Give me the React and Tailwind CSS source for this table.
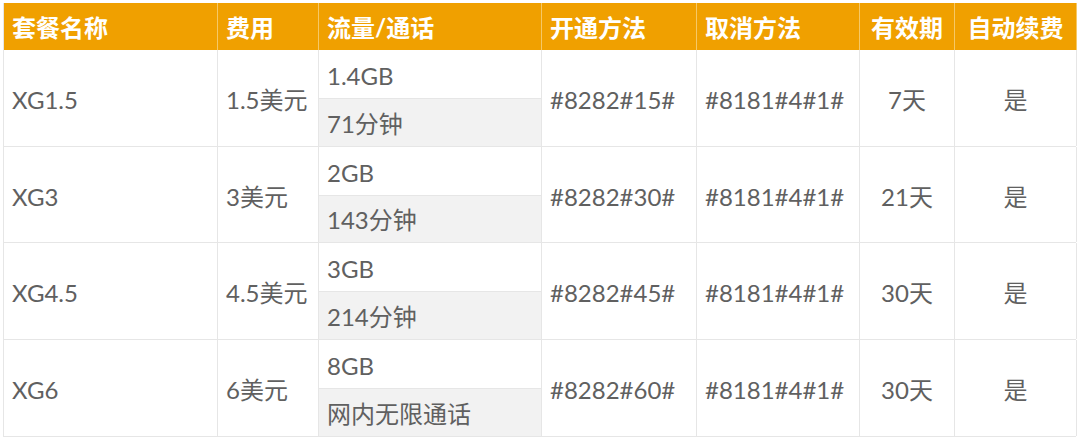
const cols = ['w-[214px]', 'w-[101px]', 'w-[223px]', 'w-[155px]', 'w-[163px]', 'w-[95px]', 'w-[122px]'];

const headers = ['套餐名称', '费用', '流量/通话', '开通方法', '取消方法', '有效期', '自动续费'];

const rows = [
  { name: 'XG1.5', fee: '1.5美元', data: '1.4GB', call: '71分钟', open: '#8282#15#', cancel: '#8181#4#1#', days: '7天', auto: '是', h: 'h-[97px]' },
  { name: 'XG3', fee: '3美元', data: '2GB', call: '143分钟', open: '#8282#30#', cancel: '#8181#4#1#', days: '21天', auto: '是', h: 'h-[96px]' },
  { name: 'XG4.5', fee: '4.5美元', data: '3GB', call: '214分钟', open: '#8282#45#', cancel: '#8181#4#1#', days: '30天', auto: '是', h: 'h-[97px]' },
  { name: 'XG6', fee: '6美元', data: '8GB', call: '网内无限通话', open: '#8282#60#', cancel: '#8181#4#1#', days: '30天', auto: '是', h: 'h-[97px]' },
];

const Cell = ({ w, center, children }) => (
  <div className={`${w} shrink-0 flex items-center pt-[4px] border-r border-[#e6e6e6] ${center ? 'justify-center' : 'pl-[8px]'}`}>
    {children}
  </div>
);

export default function App() {
  return (
    <div className="w-[1080px] h-[440px] bg-white pt-[3px] pl-[3px] text-[24px] text-[#606060]" style={{ fontFamily: 'Lato, "Noto Sans CJK SC", sans-serif' }}>
      <div className="w-[1073px] border-l border-[#e6e6e6]">
        {/* header */}
        <div className="flex h-[47px] bg-[#f0a000] text-white font-bold">
          {headers.map((t, i) => (
            <div
              key={t}
              className={`${cols[i]} shrink-0 flex items-center pt-[2px] border-r border-[#f6c866] ${i >= 5 ? 'justify-center' : 'pl-[8px]'}`}
            >
              {t}
            </div>
          ))}
        </div>

        {rows.map((r) => (
          <div key={r.name} className={`flex ${r.h} border-b border-[#e6e6e6]`}>
            <Cell w={cols[0]}>{r.name}</Cell>
            <Cell w={cols[1]}>{r.fee}</Cell>
            <div className={`${cols[2]} shrink-0 flex flex-col border-r border-[#e6e6e6]`}>
              <div className="flex-1 flex items-center pt-[4px] pl-[8px] border-b border-[#e6e6e6]">{r.data}</div>
              <div className="flex-1 flex items-center pt-[3px] pl-[8px] bg-[#f2f2f2]">{r.call}</div>
            </div>
            <Cell w={cols[3]}>{r.open}</Cell>
            <Cell w={cols[4]}>{r.cancel}</Cell>
            <Cell w={cols[5]} center>{r.days}</Cell>
            <Cell w={cols[6]} center>{r.auto}</Cell>
          </div>
        ))}
      </div>
    </div>
  );
}
